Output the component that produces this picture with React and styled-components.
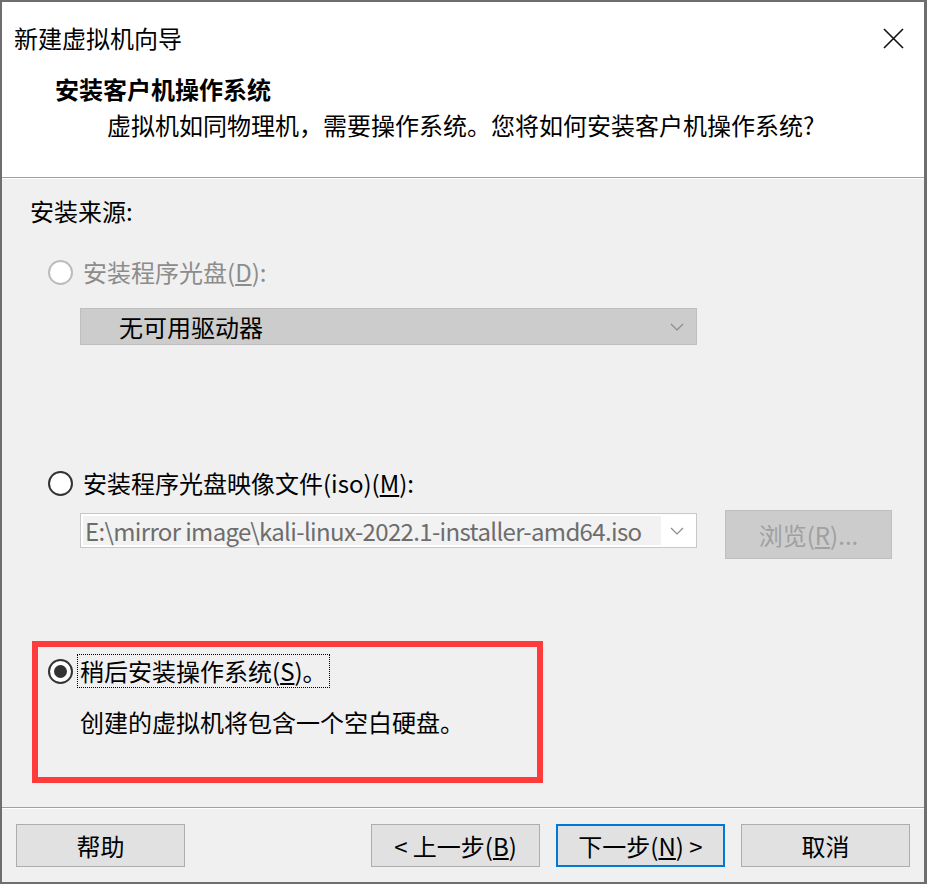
import React from "react";
import styled, { createGlobalStyle } from "styled-components";

const GlobalStyle = createGlobalStyle`
  html, body {
    margin: 0;
    padding: 0;
    background: #6e6e6e;
  }
  body {
    font-family: "Noto Sans CJK SC", "Microsoft YaHei", sans-serif;
    font-size: 24px;
    color: #000;
  }
  * {
    box-sizing: border-box;
  }
`;

const Window = styled.div`
  width: 927px;
  height: 884px;
  border: 2px solid #6e6e6e;
  border-right-width: 3px;
  background: #f0f0f0;
  display: flex;
  flex-direction: column;
  overflow: hidden;
`;

const Header = styled.header`
  height: 176px;
  background: #fff;
  border-bottom: 1px solid #a0a0a0;
  box-shadow: 0 1px 0 #fff;
  display: flex;
  flex-direction: column;
`;

const TitleBar = styled.div`
  display: flex;
  align-items: center;
  justify-content: space-between;
  height: 58px;
  padding: 14px 20px 0 12px;
`;

const Title = styled.div`
  line-height: 32px;
  font-size: 24px;
`;

const CloseButton = styled.div`
  width: 22px;
  height: 22px;
  display: flex;
  align-items: center;
  justify-content: center;
`;

const Heading = styled.div`
  margin: 13px 0 0 53px;
  line-height: 32px;
  font-weight: bold;
  font-size: 24px;
`;

const Subtitle = styled.div`
  margin: 4px 0 0 105px;
  line-height: 32px;
`;

const Body = styled.main`
  flex: 1;
  padding: 17px 0 0 28px;
  display: flex;
  flex-direction: column;
`;

const Label = styled.div`
  line-height: 32px;
`;

const RadioRow = styled.div`
  display: flex;
  align-items: center;
  gap: 8px;
  height: 32px;
  margin: ${(p) => p.$margin || "0"};
  margin-left: ${(p) => p.$indent || "18px"};
  color: ${(p) => (p.$disabled ? "#8c8c8c" : "#000")};
`;

const RadioCircle = styled.span`
  width: 25px;
  height: 25px;
  flex: none;
  border-radius: 50%;
  border: 2px solid ${(p) => (p.$disabled ? "#bcbcbc" : "#333")};
  background: #fff;
  display: flex;
  align-items: center;
  justify-content: center;
  &::after {
    content: "";
    display: ${(p) => (p.$checked ? "block" : "none")};
    width: 13px;
    height: 13px;
    border-radius: 50%;
    background: #333;
  }
`;

const RadioText = styled.span`
  line-height: 32px;
  padding: 0 2px;
  margin-left: ${(p) => (p.$focus ? "-3px" : "0")};
  outline: ${(p) => (p.$focus ? "1px dotted #000" : "none")};
`;

const DropDown = styled.div`
  width: 617px;
  height: ${(p) => p.$height || "37px"};
  margin: ${(p) => p.$margin};
  margin-left: 50px;
  flex: none;
  border: 1px solid ${(p) => (p.$disabled ? "#bfbfbf" : "#c8c8c8")};
  background: ${(p) => (p.$disabled ? "#cccccc" : "#fff")};
  display: flex;
  align-items: center;
  justify-content: space-between;
  padding: 2px 12px 2px ${(p) => p.$padLeft || "2px"};
  color: ${(p) => (p.$disabled ? "#000" : "#6d6d6d")};
`;

const ComboValue = styled.div`
  height: 100%;
  width: 578px;
  line-height: 29px;
  padding-left: 2px;
  background: #f2f2f2;
  white-space: nowrap;
  letter-spacing: -0.65px;
`;

const Chevron = () => (
  <svg width="14" height="8" viewBox="0 0 14 8">
    <path d="M1 1 L7 7 L13 1" fill="none" stroke="#8a8a8a" strokeWidth="1.2" />
  </svg>
);

const FileRow = styled.div`
  display: flex;
  align-items: flex-start;
  gap: 28px;
  margin-top: 14px;
`;

const Browse = styled.div`
  width: 167px;
  height: 49px;
  margin-top: -3px;
  border: 1px solid #bfbfbf;
  background: #cccccc;
  color: #a0a0a0;
  display: flex;
  align-items: center;
  justify-content: center;
  line-height: 32px;
`;

const Highlight = styled.section`
  width: 511px;
  height: 142px;
  margin: 82px 0 0 2px;
  border: 6px solid #ff3b3b;
  padding: 8px 0 0 10px;
  display: flex;
  flex-direction: column;
`;

const Description = styled.div`
  margin: 19px 0 0 32px;
  line-height: 32px;
`;

const Footer = styled.footer`
  height: 75px;
  flex: none;
  border-top: 1px solid #a0a0a0;
  box-shadow: inset 0 1px 0 #fff;
  display: flex;
  align-items: flex-start;
  padding: 16px 14px 0 14px;
  gap: 16px;
`;

const Spacer = styled.div`
  flex: 1;
`;

const Button = styled.button`
  width: 169px;
  height: 43px;
  font: inherit;
  font-size: 24px;
  color: #000;
  background: #e1e1e1;
  border: ${(p) => (p.$default ? "2px solid #0078d7" : "1px solid #adadad")};
  display: flex;
  align-items: center;
  justify-content: center;
  padding: 0;
  line-height: 32px;
`;

export default function App() {
  return (
    <>
      <GlobalStyle />
      <Window>
        <Header>
          <TitleBar>
            <Title>新建虚拟机向导</Title>
            <CloseButton>
              <svg width="21" height="21" viewBox="0 0 21 21">
                <path d="M1 1 L20 20 M20 1 L1 20" stroke="#111" strokeWidth="1.6" />
              </svg>
            </CloseButton>
          </TitleBar>
          <Heading>安装客户机操作系统</Heading>
          <Subtitle>虚拟机如同物理机，需要操作系统。您将如何安装客户机操作系统?</Subtitle>
        </Header>
        <Body>
          <Label>安装来源:</Label>
          <RadioRow $disabled $margin="29px 0 0 0">
            <RadioCircle $disabled />
            <RadioText>
              安装程序光盘(<u>D</u>):
            </RadioText>
          </RadioRow>
          <DropDown $disabled $margin="20px 0 0 0" $padLeft="38px">
            <span>无可用驱动器</span>
            <Chevron />
          </DropDown>
          <RadioRow $margin="122px 0 0 0">
            <RadioCircle />
            <RadioText>
              安装程序光盘映像文件(iso)(<u>M</u>):
            </RadioText>
          </RadioRow>
          <FileRow>
            <DropDown $margin="0" $height="35px">
              <ComboValue>E:\mirror image\kali-linux-2022.1-installer-amd64.iso</ComboValue>
              <Chevron />
            </DropDown>
            <Browse>
              浏览(<u>R</u>)...
            </Browse>
          </FileRow>
          <Highlight>
            <RadioRow $indent="0">
              <RadioCircle $checked />
              <RadioText $focus>
                稍后安装操作系统(<u>S</u>)。
              </RadioText>
            </RadioRow>
            <Description>创建的虚拟机将包含一个空白硬盘。</Description>
          </Highlight>
        </Body>
        <Footer>
          <Button>帮助</Button>
          <Spacer />
          <Button>
            &lt; 上一步(<u>B</u>)
          </Button>
          <Button $default>
            下一步(<u>N</u>) &gt;
          </Button>
          <Button>取消</Button>
        </Footer>
      </Window>
    </>
  );
}
